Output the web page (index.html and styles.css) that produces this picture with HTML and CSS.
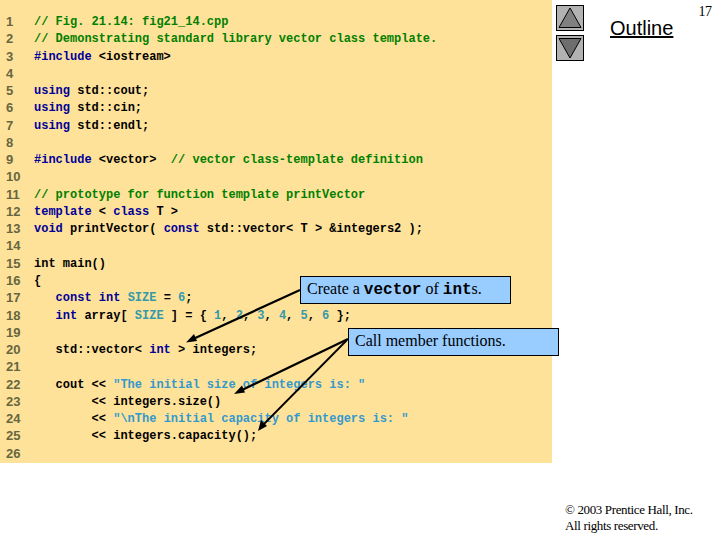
FILE: index.html
```html
<!DOCTYPE html>
<html lang="en">
<head>
<meta charset="utf-8">
<title>Fig. 21.14</title>
<link rel="stylesheet" href="styles.css">
</head>
<body>
<div class="slide">
  <main class="panel">
    <ol class="code">
      <li><span class="n">1</span><code><i>// Fig. 21.14: fig21_14.cpp</i></code></li>
      <li><span class="n">2</span><code><i>// Demonstrating standard library vector class template.</i></code></li>
      <li><span class="n">3</span><code><b>#include</b> &lt;iostream&gt;</code></li>
      <li><span class="n">4</span><code></code></li>
      <li><span class="n">5</span><code><b>using</b> std::cout;</code></li>
      <li><span class="n">6</span><code><b>using</b> std::cin;</code></li>
      <li><span class="n">7</span><code><b>using</b> std::endl;</code></li>
      <li><span class="n">8</span><code></code></li>
      <li><span class="n">9</span><code><b>#include</b> &lt;vector&gt;  <i>// vector class-template definition</i></code></li>
      <li><span class="n">10</span><code></code></li>
      <li><span class="n">11</span><code><i>// prototype for function template printVector</i></code></li>
      <li><span class="n">12</span><code><b>template</b> &lt; <b>class</b> T &gt;</code></li>
      <li><span class="n">13</span><code><b>void</b> printVector( <b>const</b> std::vector&lt; T &gt; &amp;integers2 );</code></li>
      <li><span class="n">14</span><code></code></li>
      <li><span class="n">15</span><code>int main()</code></li>
      <li><span class="n">16</span><code>{</code></li>
      <li><span class="n">17</span><code>   <b>const</b> <b>int</b> <u>SIZE</u> = <u>6</u>;</code></li>
      <li><span class="n">18</span><code>   <b>int</b> array[ <u>SIZE</u> ] = { <u>1</u>, <u>2</u>, <u>3</u>, <u>4</u>, <u>5</u>, <u>6</u> };</code></li>
      <li><span class="n">19</span><code></code></li>
      <li><span class="n">20</span><code>   std::vector&lt; <b>int</b> &gt; integers;</code></li>
      <li><span class="n">21</span><code></code></li>
      <li><span class="n">22</span><code>   cout &lt;&lt; <s>"The initial size of integers is: "</s></code></li>
      <li><span class="n">23</span><code>        &lt;&lt; integers.size()</code></li>
      <li><span class="n">24</span><code>        &lt;&lt; <s>"\nThe initial capacity of integers is: "</s></code></li>
      <li><span class="n">25</span><code>        &lt;&lt; integers.capacity();</code></li>
      <li><span class="n">26</span><code></code></li>
    </ol>
  </main>
  <aside class="side">
    <div class="side-top">
      <div class="nav">
        <svg class="nav-btn" width="28" height="26" viewBox="0 0 28 26"><rect x="0.5" y="0.5" width="27" height="25" fill="#b2b2b2" stroke="#000"/><path d="M14 3 L25 22.5 H3 Z" fill="#808080" stroke="#000"/></svg>
        <svg class="nav-btn" width="28" height="26" viewBox="0 0 28 26"><rect x="0.5" y="0.5" width="27" height="25" fill="#b2b2b2" stroke="#000"/><path d="M3 3.5 H25 L14 23 Z" fill="#6e6e6e" stroke="#000"/></svg>
      </div>
      <div class="outline">Outline</div>
      <div class="page">17</div>
    </div>
    <footer class="copy">© 2003 Prentice Hall, Inc.<br>All rights reserved.</footer>
  </aside>

  <svg class="arrows" width="720" height="540" viewBox="0 0 720 540">
    <g stroke="#000" fill="none">
      <path d="M300 290 L192 339.500" stroke-width="2.200"/>
      <path d="M348 339 L240 391" stroke-width="2.200"/>
      <path d="M347 340 L262 426" stroke-width="1.800"/>
    </g>
    <g fill="#000">
      <path d="M186 342.500 L194 334 L197 341 Z"/>
      <path d="M234 394 L242 385.500 L245 392.500 Z"/>
      <path d="M258 431 L261 420 L267 426 Z"/>
    </g>
  </svg>
  <div class="callout c1">Create a <strong>vector</strong> of <strong>int</strong>s.</div>
  <div class="callout c2">Call member functions.</div>
</div>
</body>
</html>
```
FILE: styles.css
```css
* { box-sizing: border-box; }
html, body { margin: 0; padding: 0; background: #fff; }
.slide {
  position: relative;
  display: flex;
  width: 720px;
  height: 540px;
  overflow: hidden;
}
.panel {
  width: 552px;
  height: 463px;
  flex: none;
  padding-top: 13px;
  background: #ffe29a;
}
.code { list-style: none; margin: 0; padding: 0; }
.code li {
  display: flex;
  height: 17.28px;
  line-height: 17.28px;
}
.n {
  flex: none;
  width: 34px;
  padding-left: 6px;
  font: bold 13px/17.28px "Liberation Sans", Arial, sans-serif;
  color: #666640;
}
.code code {
  padding-top: 1px;
  white-space: pre;
  font: bold 12px/17.28px "Liberation Mono", "Courier New", monospace;
  color: #000;
}
.code b { font-weight: bold; color: #000099; }
.code i { font-style: normal; color: #008000; }
.code u { text-decoration: none; color: #3399aa; }
.code s { text-decoration: none; color: #3399cc; }

.side {
  flex: 1;
  display: flex;
  flex-direction: column;
  justify-content: space-between;
}
.side-top { display: flex; align-items: flex-start; }
.nav {
  display: flex;
  flex-direction: column;
  gap: 4px;
  margin: 5px 0 0 4px;
}
.nav-btn { display: block; }
.outline {
  margin: 16px 0 0 26px;
  font: 20px/24px "Liberation Sans", Arial, sans-serif;
  text-decoration: underline;
  color: #000;
}
.page {
  margin: 4px 0 0 25px;
  font: 14px/16px "Liberation Serif", "Times New Roman", serif;
  letter-spacing: -0.5px;
  color: #000;
}
.copy {
  padding: 0 0 6px 13px;
  font: 13px/16px "Liberation Serif", "Times New Roman", serif;
  letter-spacing: -0.36px;
  color: #000;
}

.arrows { position: absolute; left: 0; top: 0; pointer-events: none; }
.callout {
  position: absolute;
  width: 211px;
  padding-left: 6px;
  background: #99ccff;
  border: 1px solid #000;
  font: 16px/24px "Liberation Serif", "Times New Roman", serif;
  color: #000;
}
.callout strong { font: bold 16px/24px "Liberation Mono", "Courier New", monospace; }
.c1 { left: 300px; top: 276px; height: 28px; }
.c2 { left: 348px; top: 328px; height: 28px; }
```
